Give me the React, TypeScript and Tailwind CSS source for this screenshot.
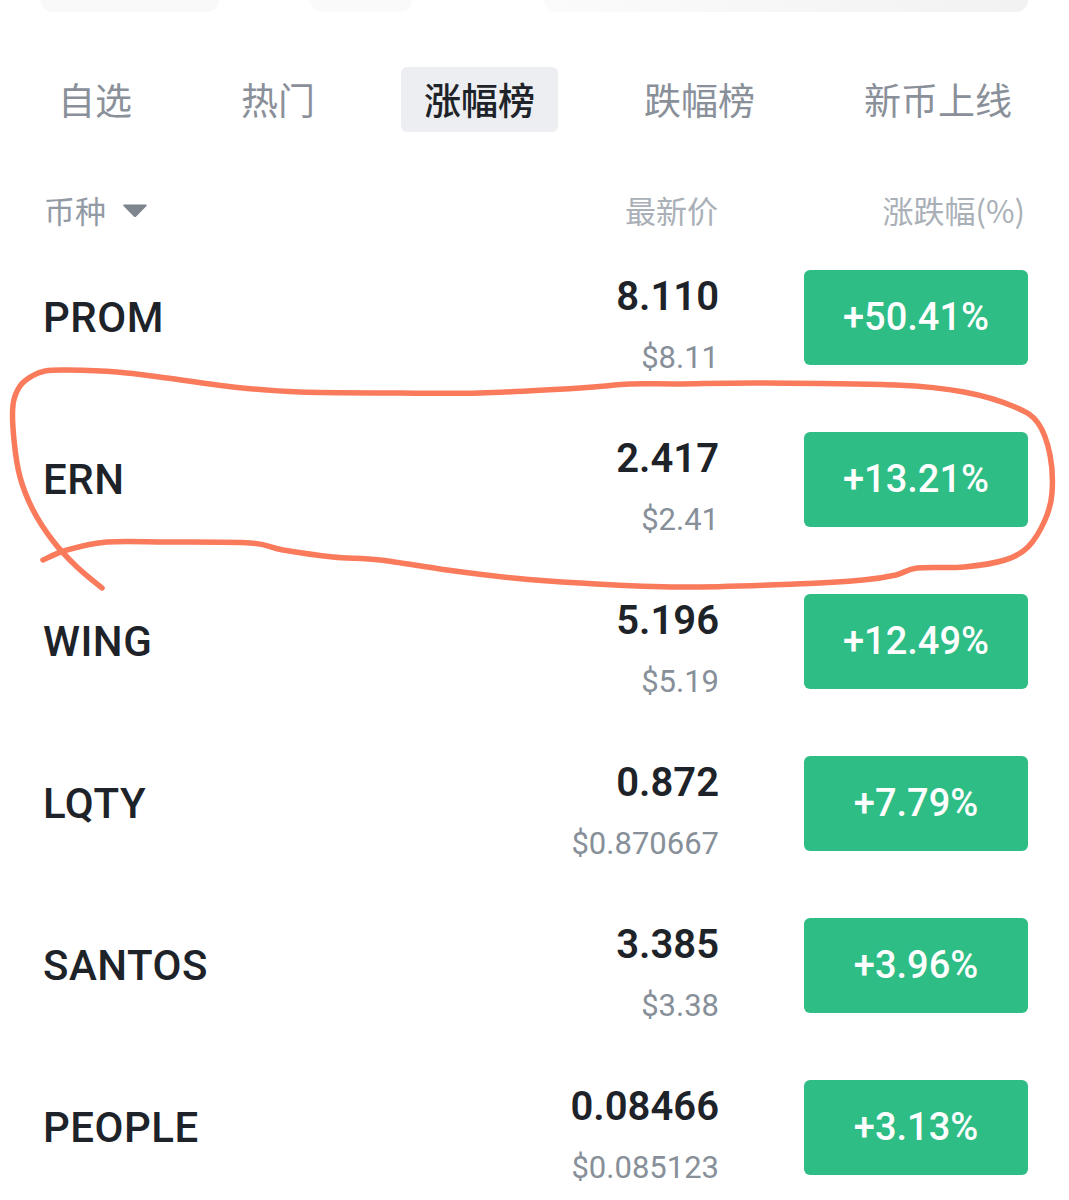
import React from "react";

const rows = [
  { name: "PROM", price: "8.110", usd: "$8.11", chg: "+50.41%" },
  { name: "ERN", price: "2.417", usd: "$2.41", chg: "+13.21%" },
  { name: "WING", price: "5.196", usd: "$5.19", chg: "+12.49%" },
  { name: "LQTY", price: "0.872", usd: "$0.870667", chg: "+7.79%" },
  { name: "SANTOS", price: "3.385", usd: "$3.38", chg: "+3.96%" },
  { name: "PEOPLE", price: "0.08466", usd: "$0.085123", chg: "+3.13%" },
];

const tabs = ["自选", "热门", "涨幅榜", "跌幅榜", "新币上线"];

const pts: [number, number][] = [
  [102, 588], [77, 567], [53, 541], [33, 510], [20, 477], [14, 440], [13, 405], [20, 386],
  [32, 376], [45, 371], [67, 370], [117, 372], [167, 378], [233, 387], [300, 392], [400, 393],
  [480, 393], [580, 388], [630, 384], [680, 384], [761, 383], [896, 385], [964, 392], [1015, 407],
  [1038, 423], [1050, 455], [1052, 493], [1045, 520], [1028, 547], [1005, 560], [964, 567],
  [917, 568], [896, 575], [863, 580], [795, 584], [680, 587], [580, 583], [513, 578], [447, 570],
  [380, 560], [333, 557], [283, 550], [250, 543], [167, 542], [107, 542], [67, 550], [43, 560],
];

function smoothPath(p: [number, number][]) {
  let d = `M${p[0][0]},${p[0][1]}`;
  for (let i = 0; i < p.length - 1; i++) {
    const p0 = p[i - 1] || p[i];
    const p1 = p[i];
    const p2 = p[i + 1];
    const p3 = p[i + 2] || p2;
    const c1x = p1[0] + (p2[0] - p0[0]) / 6;
    const c1y = p1[1] + (p2[1] - p0[1]) / 6;
    const c2x = p2[0] - (p3[0] - p1[0]) / 6;
    const c2y = p2[1] - (p3[1] - p1[1]) / 6;
    d += ` C${c1x.toFixed(1)},${c1y.toFixed(1)} ${c2x.toFixed(1)},${c2y.toFixed(1)} ${p2[0]},${p2[1]}`;
  }
  return d;
}

export default function App() {
  return (
    <div
      className="relative w-[1069px] h-[1200px] overflow-hidden bg-white"
      style={{ fontFamily: 'Roboto, "Noto Sans CJK SC", sans-serif' }}
    >
      {/* cut-off cards at the top */}
      <div className="flex h-[12px]">
        <div className="ml-[41px] w-[178px] h-[12px] rounded-b-[14px] bg-[#f9f9f9]" />
        <div className="ml-[91px] w-[102px] h-[12px] rounded-b-[14px] bg-[#fafafa]" />
        <div className="ml-[132px] w-[484px] h-[12px] rounded-b-[14px] bg-gradient-to-r from-[#fbfbfb] to-[#f2f2f2]" />
      </div>

      {/* tabs */}
      <div
        className="mt-[55px] flex h-[65px] items-stretch gap-[63px] pl-[35px]"
        style={{ fontFamily: '"Noto Sans CJK SC", sans-serif' }}
      >
        {tabs.map((t, i) => (
          <div
            key={t}
            className={
              i === 2
                ? "flex items-center rounded-[6px] bg-[#eceef1] px-[23px] text-[37px] font-medium text-[#1e2329]"
                : "flex items-center px-[23px] text-[37px] text-[#8a9099]"
            }
          >
            {t}
          </div>
        ))}
      </div>

      {/* header */}
      <div
        className="mt-[53px] flex h-[50px] items-center pl-[44px] pr-[44px] text-[31px] leading-[40px]"
        style={{ fontFamily: '"Noto Sans CJK SC", sans-serif' }}
      >
        <div className="flex flex-1 items-center">
          <span className="text-[#929aa4]">币种</span>
          <svg className="ml-[16px]" width="26" height="15" viewBox="0 0 26 15">
            <path d="M2,1.5 L24,1.5 Q25.5,1.5 24.5,3 L14.2,13.5 Q13,14.6 11.8,13.5 L1.5,3 Q0.5,1.5 2,1.5 Z" fill="#7d858f" />
          </svg>
        </div>
        <div className="text-right text-[#aab0b7]">最新价</div>
        <div className="ml-[83px] w-[224px] text-right text-[#aab0b7]">涨跌幅(%)</div>
      </div>

      {/* rows */}
      <div className="mt-[10px] flex flex-col">
        {rows.map((r) => (
          <div key={r.name} className="flex h-[162px] items-start pl-[43px] pr-[41px]">
            <div className="mt-[25px] flex h-[95px] flex-1 items-center text-[42px] font-medium leading-[50px] tracking-[0.5px] text-[#1e2329]">
              {r.name}
            </div>
            <div className="flex flex-col items-end pt-[28px]">
              <div className="text-[40px] font-semibold leading-[48px] text-[#1e2329]">{r.price}</div>
              <div className="mt-[19px] text-[31px] leading-[36px] text-[#878f99]">{r.usd}</div>
            </div>
            <div className="ml-[85px] mt-[25px] flex h-[95px] w-[224px] items-center justify-center rounded-[6px] bg-[#2ebd85] text-[38px] font-medium text-white">
              {r.chg}
            </div>
          </div>
        ))}
      </div>

      {/* hand-drawn annotation */}
      <svg
        className="pointer-events-none absolute left-0 top-0"
        width="1069"
        height="1200"
        viewBox="0 0 1069 1200"
      >
        <path
          d={smoothPath(pts)}
          fill="none"
          stroke="#fa7a5c"
          strokeWidth="5.5"
          strokeLinecap="round"
          strokeLinejoin="round"
        />
      </svg>
    </div>
  );
}
